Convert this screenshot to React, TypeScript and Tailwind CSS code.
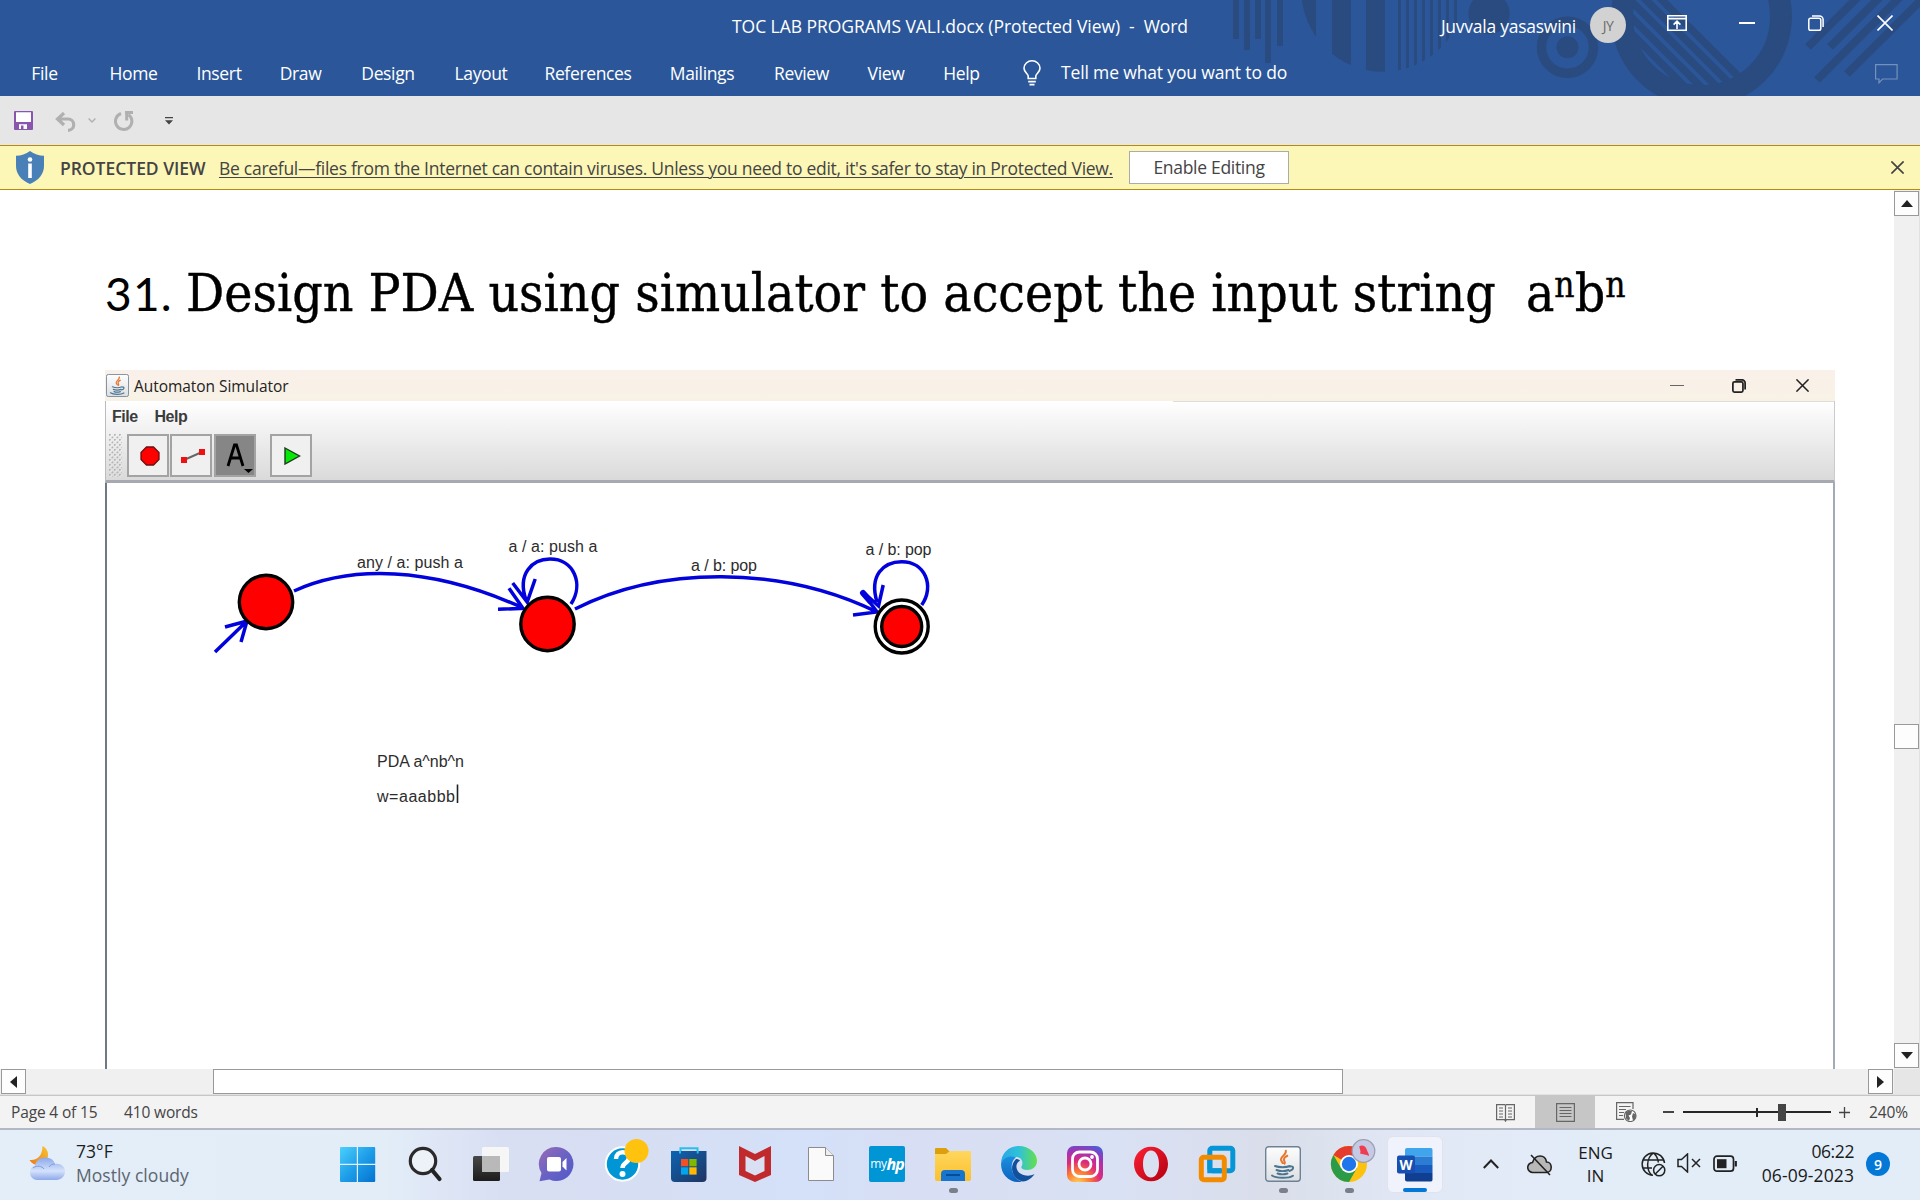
import React from "react";

const tabs: [string, string][] = [
  ["File", "w-[89px]"],
  ["Home", "w-[89px]"],
  ["Insert", "w-[82px]"],
  ["Draw", "w-[81px]"],
  ["Design", "w-[94px]"],
  ["Layout", "w-[92px]"],
  ["References", "w-[122px]"],
  ["Mailings", "w-[106px]"],
  ["Review", "w-[93px]"],
  ["View", "w-[76px]"],
  ["Help", "w-[75px]"],
];

function HeaderPattern() {
  const bars = [[1233, 39], [1244, 50], [1255, 39], [1265, 63], [1277, 46]];
  const wide = [[1302, 14], [1332, 19], [1366, 19]];
  const thin = [1398, 1406, 1414, 1422, 1430, 1438, 1446, 1454];
  return (
    <svg className="absolute right-0 top-0" width="720" height="96" viewBox="1200 0 720 96" fill="#2a4b80">
      <defs>
        <clipPath id="disc"><circle cx="1383" cy="-10" r="81.7" /></clipPath>
        <clipPath id="hole"><circle cx="1701.5" cy="16.6" r="69.5" /></clipPath>
      </defs>
      {bars.map(([x, h]) => <rect key={x} x={x} y="0" width="6" height={h} />)}
      <g clipPath="url(#disc)">
        {wide.map(([x, w]) => <rect key={x} x={x} y="0" width={w} height="96" />)}
        {thin.map((x) => <rect key={x} x={x} y="0" width="3" height="96" />)}
      </g>
      <circle cx="1489" cy="13.5" r="20.7" />
      <circle cx="1567.5" cy="47.3" r="26" fill="none" stroke="#2a4b80" strokeWidth="9.5" />
      <circle cx="1567.5" cy="47.3" r="11" />
      <circle cx="1701.5" cy="16.6" r="79.5" fill="none" stroke="#2a4b80" strokeWidth="22" />
      <g clipPath="url(#hole)" stroke="#2a4b80" strokeWidth="7.5">
        <path d="M1620 22l90 90M1620 6l100 100M1620 -10l110 110M1620 -26l130 130M1620 -42l140 140" />
      </g>
      <g stroke="#2a4b80" strokeWidth="8">
        <path d="M1808 47l55-55M1830 47l55-55M1817 80l94-94M1847 74l80-80" />
      </g>
    </svg>
  );
}

function RestoreIcon({ color, w }: { color: string; w: number }) {
  return (
    <svg width="16" height="16" viewBox="0 0 16 16" fill="none" stroke={color} strokeWidth={w}>
      <rect x="0.8" y="3.2" width="12" height="12" rx="1.8" />
      <path d="M4 .9h7.5a3.6 3.6 0 0 1 3.6 3.6V12" />
    </svg>
  );
}

function CloseIcon({ color, size, w }: { color: string; size: number; w: number }) {
  return (
    <svg width={size} height={size} viewBox="0 0 16 16" stroke={color} strokeWidth={w}>
      <path d="M.5.5l15 15M15.5.5l-15 15" />
    </svg>
  );
}

function Header() {
  return (
    <header className="relative h-[96px] bg-[#2b579a] text-[17.5px] text-white">
      <HeaderPattern />
      <div className="relative flex h-[46px] items-center">
        <div className="w-[732px] shrink-0" />
        <div className="whitespace-pre pt-[7px] tracking-[-0.05px]">TOC LAB PROGRAMS VALI.docx (Protected View)  -  Word</div>
        <div className="flex flex-1 items-center justify-end pr-[27px]">
          <span className="mr-[14px] pt-[7px] tracking-[-0.25px]">Juvvala yasaswini</span>
          <span className="mr-[41px] mt-[4px] flex h-9 w-9 items-center justify-center rounded-full bg-[#d2d2d2] text-[14px] tracking-[-0.5px] text-[#6a6a6a]">JY</span>
          <svg className="mr-[52px]" width="20" height="16" viewBox="0 0 20 16" fill="none" stroke="#fff" strokeWidth="1.6">
            <path d="M.8.8h18.4v14.4H.8zM.8 3.6h18.4M10 14V6.5M6.6 9.6L10 6.2l3.4 3.4" />
          </svg>
          <div className="mr-[53px] h-[1.5px] w-4 bg-white" />
          <div className="mr-[53px]"><RestoreIcon color="#fff" w={1.5} /></div>
          <CloseIcon color="#fff" size={16} w={1.6} />
        </div>
      </div>
      <div className="relative flex h-[50px] items-center">
        {tabs.map(([t, w]) => (
          <div key={t} className={`${w} pt-[4px] text-center tracking-[-0.35px]`}>{t}</div>
        ))}
        <svg className="ml-[24px] mt-[4px]" width="18" height="26" viewBox="0 0 18 26" fill="none" stroke="#fff" strokeWidth="1.6">
          <path d="M5.2 18.5v-2.6C4.6 13.6 1 12 1 8.200A8 7.400 0 0 1 17 8.200c0 3.800-3.600 5.400-4.200 7.700v2.600zM5.200 21.600h7.600M6.500 24.600h5" />
        </svg>
        <span className="ml-[20px] pt-[3px] tracking-[-0.15px]">Tell me what you want to do</span>
        <svg className="ml-auto mr-[22px] mt-[5px]" width="23" height="20" viewBox="0 0 23 20" fill="none" stroke="#7490bd" strokeWidth="1.200">
          <path d="M.6.6h21.500v14.400H7.500L4 18.800V15H.6z" />
        </svg>
      </div>
    </header>
  );
}

function QuickAccess() {
  return (
    <div className="flex h-[49px] items-center bg-[#e6e6e6] pl-[14px]">
      <svg width="19" height="19" viewBox="0 0 19 19">
        <path d="M0 1a1 1 0 0 1 1-1h17a1 1 0 0 1 1 1v17a1 1 0 0 1-1 1H1a1 1 0 0 1-1-1z" fill="#8a55ac" />
        <path d="M2 1.300h15v9.700H2zM5 13.300h8V18H9.500v-3.500H7V18H5z" fill="#fff" />
      </svg>
      <svg className="ml-[22px] mt-[2px]" width="22" height="20" viewBox="0 0 22 20" fill="none" stroke="#b0b0b0" strokeWidth="3.200">
        <path d="M9 1L2.500 7l6.500 6M3 7h10a5.700 5.700 0 0 1 0 11.400" />
      </svg>
      <svg className="ml-[11px]" width="8" height="5" viewBox="0 0 8 5" fill="none" stroke="#b0b0b0" strokeWidth="1.400">
        <path d="M.6.6L4 4 7.400.6" />
      </svg>
      <svg className="ml-[18px] mt-px" width="20" height="20" viewBox="0 0 20 20" fill="none" stroke="#b0b0b0" strokeWidth="3">
        <path d="M7 2.500A8.200 8.200 0 1 0 14.500 3.600M11 1.500h8M12.700 1v8.500" />
      </svg>
      <svg className="ml-[31px]" width="8" height="8" viewBox="0 0 8 8" fill="#444">
        <path d="M0 0h8v1.300H0zM0 3.200h8L4 7.600z" />
      </svg>
    </div>
  );
}

function ProtectedBar() {
  return (
    <div className="flex h-[45px] items-center border-y border-[#b8890f] bg-[#fcf7b6] text-[17.500px] text-[#444]">
      <svg className="ml-4" width="28" height="33" viewBox="0 0 28 33">
        <path d="M14 0c4 3 9 4.600 14 4.800V15c0 8-5.500 14.500-14 18C5.500 29.500 0 23 0 15V4.800C5 4.600 10 3 14 0z" fill="#4a80b8" />
        <circle cx="14" cy="8.500" r="2.300" fill="#fff" />
        <rect x="12.200" y="12.500" width="3.600" height="14.500" fill="#fff" />
      </svg>
      <b className="ml-[16px] w-[159px] shrink-0 whitespace-nowrap pt-[2px] font-semibold tracking-[-0.030px]">PROTECTED VIEW</b>
      <span className="whitespace-nowrap pt-[2px] tracking-[-0.280px] underline decoration-1 underline-offset-[2px]">
        Be careful—files from the Internet can contain viruses. Unless you need to edit, it's safer to stay in Protected View.
      </span>
      <div className="ml-auto mr-[602px] flex h-[33px] w-[160px] items-center justify-center border border-[#ababab] bg-white tracking-[-0.3px]">Enable Editing</div>
      <div className="mr-[16px]"><CloseIcon color="#444" size={13} w={2} /></div>
    </div>
  );
}

function JavaCup({ size }: { size: number }) {
  return (
    <svg width={size} height={size} viewBox="0 0 36 36">
      <defs>
        <linearGradient id="jb" x1="0" y1="0" x2="0" y2="1"><stop offset="0" stopColor="#fdfdfd" /><stop offset="1" stopColor="#dcdfe2" /></linearGradient>
      </defs>
      <rect x=".7" y=".7" width="34.600" height="34.600" rx="3" fill="url(#jb)" stroke="#6e8296" strokeWidth="1.400" />
      <path d="M20.500 4c2.500 4-5.500 6.500-4.500 10 .5 1.600 2 2.500 2 4M23 9.500c-3.500 1.500-5 3.500-3.600 5.500.8 1.200.6 2.200-.4 3.400" fill="none" stroke="#e8772e" strokeWidth="2" />
      <path d="M10 20c4 1.600 11 1.600 15 0M11.500 24c3.500 1.300 8.500 1.300 12 0M12.500 27.500c3 1 7 1 10 0M25 20.500c4-1 4.500 3-.5 4.500M7 29.500c4 3 17 3 21 .2" fill="none" stroke="#4d7490" strokeWidth="1.900" strokeLinecap="round" />
    </svg>
  );
}

function Automaton() {
  return (
    <svg className="block" width="1726" height="586" viewBox="107 483 1726 586">
      <g fill="none" stroke="#0202dc" strokeWidth="3.500">
        <path d="M215 652L247 621M225 627l22-6-6 21" />
        <path d="M294 591C350 565.500 430 565.500 523 608M498 609.300l25-1-14-20" />
        <path d="M526 600C517 574 532 559 550 559C574 559 584 584 571 604M512.700 583l14.500 19 8-23" />
        <path d="M575 609C660 566 780 565 877 612M853 615l24-3-14-19" />
        <path d="M877 602C869 576 883 561.700 901.700 561.700C925 561.700 935 586 921.700 605M863 592l15.500 14 4.700-21" />
      </g>
      <path d="M863 593l7 8" stroke="#0202dc" strokeWidth="6" strokeLinecap="round" />
      <g stroke="#000" strokeWidth="3.400">
        <circle cx="266" cy="602" r="26.700" fill="#fe0000" />
        <circle cx="547.500" cy="624" r="26.700" fill="#fe0000" />
        <circle cx="901.700" cy="626.500" r="26.500" fill="#fff" />
        <circle cx="901.700" cy="626.500" r="20" fill="#fe0000" />
      </g>
      <g fill="#2c2c2c" fontFamily="Liberation Sans, sans-serif" fontSize="16">
        <text x="357" y="567.500" textLength="106">any / a: push a</text>
        <text x="508.500" y="551.500" textLength="89">a / a: push a</text>
        <text x="691" y="571" textLength="66">a / b: pop</text>
        <text x="865.500" y="554.500" textLength="66">a / b: pop</text>
        <text x="377" y="767" textLength="87">PDA a^nb^n</text>
        <text x="377" y="802" textLength="78">w=aaabbb</text>
      </g>
      <path d="M457.500 784.500v18.500" stroke="#222" strokeWidth="1.600" />
    </svg>
  );
}

function Simulator() {
  const btn = "flex h-[43px] w-[42px] items-center justify-center border-2 border-[#a3a3a3] bg-[#f0f0f0]";
  return (
    <div className="ml-[105px] flex w-[1730px] flex-col">
      <div className="flex h-[31px] items-center bg-gradient-to-b from-[#faf0ea] to-[#f8f2e6] pl-[1px]">
        <JavaCup size={23} />
        <span className="ml-[5px] pt-[2px] text-[15.500px] tracking-[-0.05px] text-[#222]">Automaton Simulator</span>
        <div className="ml-auto mr-[48px] h-[1.500px] w-[14px] bg-[#666]" />
        <div className="mr-[50px]">
          <svg width="14" height="14" viewBox="0 0 16 16" fill="none" stroke="#222" strokeWidth="2"><rect x="1" y="3.200" width="11.500" height="11.800" rx="1.800" /><path d="M4 1h7.500A3.500 3.500 0 0 1 15 4.500V12" /></svg>
        </div>
        <div className="mr-[26px]"><CloseIcon color="#222" size={13} w={1.900} /></div>
      </div>
      <div className="flex h-[82px] flex-col border-b-[3px] border-l border-r border-[#a6a9af] border-l-[#b9bcc0] border-r-[#c9cbce] bg-gradient-to-b from-white to-[#dadada]">
        <div className="ml-auto h-px w-[661px] bg-[#deddd8]" />
        <div className="flex h-[30px] items-center gap-[17px] pl-[6px] font-['Liberation_Sans'] text-[16px] font-bold tracking-[-0.500px] text-[#3c3c3c]">
          <span>File</span><span>Help</span>
        </div>
        <div className="mt-[2px] flex items-center pl-[3px]">
          <svg className="mr-[5px]" width="13" height="43">
            <defs><pattern id="grip" width="5" height="5" patternUnits="userSpaceOnUse"><path d="M0 0h1.800v1.800H0zM2.500 2.500h1.800v1.800H2.500z" fill="#b4b4b4" /><path d="M1.500 1.500h1v1h-1z" fill="#fff" /></pattern></defs>
            <rect width="13" height="43" fill="url(#grip)" />
          </svg>
          <div className={btn + " pl-[3px]"}>
            <svg width="20" height="20" viewBox="0 0 20 20"><path d="M6.500 1h7L19 6.500v7L13.500 19h-7L1 13.500v-7z" fill="#fe0000" stroke="#6b1010" strokeWidth="1.300" /></svg>
          </div>
          <div className={btn + " ml-px pl-[3px]"}>
            <svg width="26" height="16" viewBox="0 0 26 16"><path d="M4 12L22 4" stroke="#666" strokeWidth="2" /><path d="M1 9h6v6H1zM19 1h6v6h-6z" fill="#f01010" /></svg>
          </div>
          <div className="ml-[2px] flex h-[43px] w-[42px] items-center justify-center border-2 border-[#a3a3a3] bg-[#868686] pl-[6px]">
            <svg width="30" height="34" viewBox="0 0 30 34"><path d="M5 27l6.500-21h2L20 27M7.500 19h10" fill="none" stroke="#000" strokeWidth="2.800" /><path d="M21 30h9l-4.500 4z" /></svg>
          </div>
          <div className={btn + " ml-[14px] pl-[2px]"}>
            <svg width="17" height="18" viewBox="0 0 17 18"><path d="M1 1l14.500 8L1 17z" fill="#08e808" stroke="#1c3c1c" strokeWidth="1.400" /></svg>
          </div>
        </div>
      </div>
      <div className="h-[586px] border-l-2 border-r-2 border-l-[#6f7884] border-r-[#a3abb6]"><Automaton /></div>
    </div>
  );
}

const sbBtn = "flex h-[25px] w-[25px] shrink-0 items-center justify-center border border-[#999] bg-[#fdfdfd]";

function DocumentArea() {
  return (
    <div className="flex h-[879px] overflow-hidden bg-white">
      <div className="flex w-[1894px] flex-col">
        <h1 className="flex h-[180px] items-baseline whitespace-pre pl-[105px] pt-[68px] text-black">
          <span className="w-[81px] font-['Lato'] text-[46px] leading-[70px] tracking-[1.200px]">31.</span>
          <span className="font-['DejaVu_Serif_Condensed','DejaVu_Serif'] text-[53px] leading-[70px] [-webkit-text-stroke:0.4px_black]">Design PDA using simulator to accept the input string  a<span className="relative -top-[14px] text-[35px] leading-none">n</span>b<span className="relative -top-[14px] text-[35px] leading-none">n</span></span>
        </h1>
        <Simulator />
      </div>
      <div className="flex w-[26px] flex-col border-r border-[#e2e2e2] bg-[#f0f0f0] pt-px">
        <div className={sbBtn}><svg width="12" height="7"><path d="M6 0l6 7H0z" fill="#222" /></svg></div>
        <div className="mt-[508px] h-[25px] w-[25px] border border-[#999] bg-[#fdfdfd]" />
        <div className={sbBtn + " mb-px mt-auto"}><svg width="12" height="7"><path d="M0 0h12L6 7z" fill="#222" /></svg></div>
      </div>
    </div>
  );
}

function HScroll() {
  return (
    <div className="flex h-[26px] items-start border-b border-[#e2e2e2] bg-[#f0f0f0]">
      <div className={sbBtn + " ml-px"}><svg width="7" height="12"><path d="M0 6l7-6v12z" fill="#222" /></svg></div>
      <div className="ml-[187px] h-[25px] w-[1130px] border border-[#999] bg-white" />
      <div className={sbBtn + " ml-auto"}><svg width="7" height="12"><path d="M7 6L0 0v12z" fill="#222" /></svg></div>
      <div className="ml-px h-[25px] w-[26px] bg-[#e6e6e6]" />
    </div>
  );
}

function StatusBar() {
  return (
    <div className="flex h-[33px] items-center border-t border-[#c6c6c6] bg-[#f3f3f3] text-[15.500px] text-[#444]">
      <span className="ml-[11px] w-[113px] pt-[2px] tracking-[-0.150px]">Page 4 of 15</span>
      <span className="pt-[2px] tracking-[-0.150px]">410 words</span>
      <svg className="ml-auto mr-[20px]" width="19" height="19" viewBox="0 0 19 19" fill="none" stroke="#666" strokeWidth="1.200">
        <path d="M.6 1.600h8L9.500 2.500l.9-.9h8v15h-8l-.9 1.500-.9-1.500h-8zM9.500 2v16M3 5h4M3 8h4M3 11h4M3 14h4M12 5h4M12 8h4M12 11h4M12 14h4" />
      </svg>
      <div className="flex h-full w-[60px] items-center justify-center bg-[#c6c6c6]">
        <svg width="19" height="19" viewBox="0 0 19 19" fill="none" stroke="#666" strokeWidth="1.200"><path d="M.6.600h17.800v17.800H.6zM3.500 4.500h12M3.500 7.500h12M3.500 10.500h12M3.500 13.500h12" /></svg>
      </div>
      <svg className="ml-[21px]" width="21" height="20" viewBox="0 0 21 20" fill="none" stroke="#666" strokeWidth="1.200">
        <path d="M17 7V.6H.6v16.800H8M3 4.500h11.500M3 7.500h7M3 10.500h5M3 13.500h4" />
        <circle cx="14.200" cy="13.800" r="5.800" fill="#fff" stroke="#666" /><path d="M9.500 10.500l3-2 3.500.5-1 3.500-2.500 1 1.500 2.500-1 3-3-2.500zM17 11l3 1.500-.5 4-2.500 2-1-4z" fill="#666" stroke="none" />
      </svg>
      <div className="ml-[26px] h-[1.500px] w-[11px] bg-[#444]" />
      <div className="ml-[9px] flex h-[18px] w-[148px] items-center">
        <div className="h-[2px] w-[73px] bg-[#262626]" />
        <div className="h-[9px] w-[2px] bg-[#262626]" />
        <div className="h-[2px] w-[20px] bg-[#262626]" />
        <div className="h-[17px] w-[8px] bg-[#444]" />
        <div className="h-[2px] flex-1 bg-[#262626]" />
      </div>
      <svg className="ml-[8px]" width="11" height="11" stroke="#444" strokeWidth="1.300"><path d="M0 5.500h11M5.500 0v11" /></svg>
      <span className="ml-[19px] w-[51px] pt-[2px] text-[15.500px] tracking-[-0.100px]">240%</span>
    </div>
  );
}

function TaskIcon({ children, dot }: { children: React.ReactNode; dot?: boolean }) {
  return (
    <div className="flex h-[70px] w-[66px] shrink-0 flex-col items-center pt-[16px]">
      {children}
      {dot && <div className="mt-[6px] h-[5px] w-[9px] rounded-full bg-[#7b7f8a]" />}
    </div>
  );
}

const S = ({ children }: { children: React.ReactNode }) => (
  <svg width="36" height="36" viewBox="0 0 36 36" className="shrink-0 overflow-visible">{children}</svg>
);

function Taskbar() {
  return (
    <div className="flex h-[72px] items-start border-t-2 border-[#b2b8c5] bg-[linear-gradient(90deg,#e3eef8_0%,#e3edf8_20%,#d9dff3_26%,#d6def3_34%,#d4e1f9_42%,#d8def3_48%,#d9e1f4_58%,#dadeeb_66%,#e2e9f6_75%,#e2edf8_85%,#e3edf8_100%)]">
      <svg className="ml-[28px] mt-[16px]" width="38" height="36" viewBox="0 0 38 36">
        <defs>
          <linearGradient id="moon" x1="0" y1="1" x2="1" y2="0"><stop offset="0" stopColor="#ec7a1c" /><stop offset="1" stopColor="#f7c52e" /></linearGradient>
          <linearGradient id="cl" x1="0" y1="0" x2="0" y2="1"><stop offset="0" stopColor="#8aa7ea" /><stop offset=".6" stopColor="#d4e2fb" /><stop offset="1" stopColor="#8fa9ea" /></linearGradient>
        </defs>
        <path d="M14.500 0c6 3 8 11 2 16.500C12 20.500 5 20 1.500 14c8 1 13-5 13-14z" fill="url(#moon)" />
        <path d="M8.500 34A7.500 7.500 0 0 1 7 19.500C8 14 13 11 18 11.500c5 .3 8 3 9 6.500 6-1.500 10 3 10 7.500S33 34 28.500 34z" fill="url(#cl)" />
        <path d="M5 22c4-3 9-2 11 1M21 21c1-2 3-3 6-3" fill="none" stroke="#7f9be4" strokeWidth="1" />
      </svg>
      <div className="ml-[10px] mt-[9px] w-[250px] text-[17.500px] leading-[24px] tracking-[0.050px]">
        <div className="text-[#1d1d1d]">73°F</div>
        <div className="text-[#5c6570]">Mostly cloudy</div>
      </div>
      <TaskIcon>
        <S><defs><linearGradient id="win" gradientUnits="userSpaceOnUse" x1="0" y1="0" x2="36" y2="36"><stop offset="0" stopColor="#4cd0fd" /><stop offset=".5" stopColor="#1d9de8" /><stop offset="1" stopColor="#0270cf" /></linearGradient></defs>
          <path d="M-1 2q0-1 1-1h15.800v16.800H-1zM17 1h16.200q1 0 1 1v15.800H17zM-1 19h16.800v17H0q-1 0-1-1zM17 19h17.200v16q0 1-1 1H17z" fill="url(#win)" /></S>
      </TaskIcon>
      <TaskIcon><S><circle cx="16" cy="15" r="12.700" fill="#edf1f8" stroke="#2a2a2a" strokeWidth="3.200" /><path d="M25 24l7.500 9" stroke="#222" strokeWidth="4.200" strokeLinecap="round" /></S></TaskIcon>
      <TaskIcon><S><defs><linearGradient id="tv" x1="0" y1="0" x2="0" y2="1"><stop offset="0" stopColor="#484848" /><stop offset="1" stopColor="#1c1c1c" /></linearGradient></defs><rect x="0" y="10" width="27" height="25" rx="1.500" fill="url(#tv)" /><rect x="9" y="1" width="27" height="25" rx="1.500" fill="#f6f6f7" /><path d="M9 10h18v16H10.500Q9 26 9 24.500z" fill="#b9b9b9" /></S></TaskIcon>
      <TaskIcon><S><defs><linearGradient id="ch" x1="0" y1="0" x2="1" y2="1"><stop offset="0" stopColor="#9a6bb4" /><stop offset=".5" stopColor="#6a62c4" /><stop offset="1" stopColor="#5059c9" /></linearGradient></defs><path d="M17.500 1a17 17 0 1 1-7 32.500L.5 35.300l2-8.300A17 17 0 0 1 17.500 1z" fill="url(#ch)" /><rect x="8" y="11" width="14" height="14.500" rx="2" fill="#fff" /><path d="M23.500 16l4-4v12.500l-4-4z" fill="#fff" /></S></TaskIcon>
      <TaskIcon><S>
        <circle cx="17.500" cy="18" r="16.700" fill="#0096d6" stroke="#fff" strokeWidth="2" />
        <path d="M11 13c0-9 13-8.500 13-1.500 0 5.500-6.500 5-6.500 10.500" fill="none" stroke="#fff" strokeWidth="4.500" /><circle cx="17.500" cy="28" r="3" fill="#fff" />
        <circle cx="31.500" cy="5" r="12" fill="#fec20f" /></S></TaskIcon>
      <TaskIcon><S><defs><linearGradient id="st" x1="0" y1="0" x2="1" y2="1"><stop offset="0" stopColor="#0c64b4" /><stop offset="1" stopColor="#21345f" /></linearGradient></defs><path d="M9.500 8V2.200h17V8" fill="none" stroke="#2bbdf0" strokeWidth="2" /><path d="M0 5h35.500v27q0 4-4 4H4q-4 0-4-4z" fill="url(#st)" /><path d="M9 7.500V5M26.700 7.500V5" stroke="#2bbdf0" strokeWidth="2" /><path d="M10 13h7.300v7.300H10z" fill="#f25022" /><path d="M18.300 13h7.300v7.300h-7.300z" fill="#7fba00" /><path d="M10 21.300h7.300v7.300H10z" fill="#00a4ef" /><path d="M18.300 21.300h7.300v7.300h-7.300z" fill="#ffb900" /></S></TaskIcon>
      <TaskIcon><S><path d="M2 0l16 8L34 0v29l-16 7-16-7z" fill="#c02a2c" /><path d="M8.500 10l9.500 5 9.500-5v15L18 29.500 8.500 25z" fill="#d9e0f3" /></S></TaskIcon>
      <TaskIcon><S><path d="M5.500 1.500h17l8 8v25h-25z" fill="#fafafa" stroke="#8c8c8c" /><path d="M22.500 1.500v8h8" fill="#eee" stroke="#8c8c8c" /></S></TaskIcon>
      <TaskIcon><div className="flex h-9 w-9 items-center justify-center rounded-[2px] bg-[#0096d6] font-['Open_Sans'] text-[12px] tracking-[-0.500px] text-white">my<b className="text-[16px] italic tracking-[-1px]">hp</b></div></TaskIcon>
      <TaskIcon dot><S><defs><linearGradient id="fo" x1="0" y1="0" x2="0" y2="1"><stop offset="0" stopColor="#ffd75e" /><stop offset="1" stopColor="#fbc02d" /></linearGradient></defs><path d="M0 3q0-1 1-1h10l4 4v6H0z" fill="#dd9f0b" /><path d="M0 8h11l4-3h20q1 0 1 1v27q0 2-2 2H2q-2 0-2-2z" fill="url(#fo)" /><path d="M6 35v-7q0-4 4-4h16q4 0 4 4v7z" fill="#1675cf" /><path d="M11 29h14" stroke="#0b4b92" strokeWidth="2" /></S></TaskIcon>
      <TaskIcon><S>
        <defs>
          <linearGradient id="e1" x1="0" y1="0" x2="1" y2="0"><stop offset="0" stopColor="#2aa7e8" /><stop offset=".5" stopColor="#2fc2d8" /><stop offset="1" stopColor="#66e04a" /></linearGradient>
          <linearGradient id="e2" x1="0" y1="0" x2="0" y2="1"><stop offset="0" stopColor="#1b8fe0" /><stop offset="1" stopColor="#0c62bd" /></linearGradient>
        </defs>
        <path d="M0 18C0 7 8 0 18 0s18 7 18 15c0 6-5 9-9.500 9s-7-1.500-6-3.500c2-3 1-9-5-9.500C8 10.500 2 13 0 18z" fill="url(#e1)" />
        <path d="M0 18C2 11.500 9 9 15 11.500 9 15 8 31 21 35.700 9 38 0 29 0 18z" fill="url(#e2)" />
        <path d="M15 13c-8 8-3 21 7 22.600 5-.6 9-3.600 11.500-7.600-6 3.500-15 1.500-17.500-4.500-1.500-4 0-7 3-9-1-1-2.500-1.500-4-1.500z" fill="#10509c" /></S></TaskIcon>
      <TaskIcon><S><defs><radialGradient id="ig" cx=".3" cy="1.050" r="1.150"><stop offset="0" stopColor="#ffd55a" /><stop offset=".3" stopColor="#fd7a34" /><stop offset=".55" stopColor="#dd2a7b" /><stop offset=".8" stopColor="#a233b5" /><stop offset="1" stopColor="#515bd4" /></radialGradient></defs><rect width="36" height="36" rx="7" fill="url(#ig)" /><g fill="none" stroke="#fff" strokeWidth="2.800"><rect x="5.500" y="6" width="25" height="24.500" rx="7" /><circle cx="18" cy="18" r="6" /></g><circle cx="25" cy="11" r="1.900" fill="#fff" /></S></TaskIcon>
      <TaskIcon><S><defs><linearGradient id="op" x1="0" y1="0" x2="1" y2="1"><stop offset="0" stopColor="#ff2035" /><stop offset="1" stopColor="#b0000f" /></linearGradient></defs><path fillRule="evenodd" d="M18 .8C27.500.8 35 8.500 35 18s-7.500 17.300-17 17.300S1 27.500 1 18 8.500.8 18 .8zM18 4.500c-5 0-8 6-8 13.500s3 13.500 8 13.500 8-6 8-13.500-3-13.500-8-13.500z" fill="url(#op)" /></S></TaskIcon>
      <TaskIcon><S><rect x="10.800" y="2.300" width="23" height="22.500" rx="2.500" fill="none" stroke="#0695d7" strokeWidth="5" /><rect x="2.300" y="11.300" width="23" height="22.500" rx="2.500" fill="none" stroke="#f38b00" strokeWidth="5" /><path d="M10.800 14v10.800H22" fill="none" stroke="#0695d7" strokeWidth="5" /></S></TaskIcon>
      <TaskIcon dot><JavaCup size={36} /></TaskIcon>
      <TaskIcon dot><S>
        <circle cx="18" cy="18" r="18" fill="#fdc210" />
        <path d="M18 18L2.400 9A18 18 0 0 1 33.600 9z" fill="#e33b2e" /><path d="M2.400 9a18 18 0 0 0 15.600 27l8-14L18 18 10 22z" fill="#2c9b48" />
        <path d="M18 9h15.600" stroke="#e33b2e" />
        <circle cx="18" cy="18" r="9" fill="#fff" /><circle cx="18" cy="18" r="7.200" fill="#1f76ec" />
        <circle cx="32.500" cy="5" r="11.300" fill="#c6c9e4" stroke="#9a9fb4" strokeWidth="1.200" /><path d="M28.500 0c3-1.500 6 0 7 3s2.500 4.500 2.500 7c-3-1.500-6.500-1.500-9-2.500 1.500-2.500-1-5-.5-7.500z" fill="#f03c50" /></S></TaskIcon>
      <div className="mx-[5px] mt-[6px] flex h-[57px] w-[56px] shrink-0 flex-col items-center rounded-[6px] border border-[#dfe3ee] bg-[#f0f3fb] pt-[10px]">
        <svg width="36" height="36" viewBox="0 0 36 36" className="shrink-0"><path d="M8 3q0-2 2-2h24q1.500 0 1.500 2v6.500H8z" fill="#41a5ee" /><path d="M8 9.500h27.500V18H8z" fill="#2b7cd3" /><path d="M8 18h27.500v8H8z" fill="#185abd" /><path d="M8 26h27.500v6.500q0 2-1.500 2H10q-2 0-2-2z" fill="#103f91" /><rect x="0" y="8.500" width="18" height="18" rx="2" fill="#164fb0" /><text x="9" y="22.500" textAnchor="middle" fontFamily="Open Sans" fontWeight="700" fontSize="13.500" fill="#fff">W</text></svg>
        <div className="mt-[5px] h-[5px] w-[24px] rounded-full bg-[#0378d6]" />
      </div>
      <svg className="ml-[35px] mt-[29px]" width="16" height="10" viewBox="0 0 16 10" fill="none" stroke="#222" strokeWidth="2"><path d="M.8 9L8 1.500 15.200 9" /></svg>
      <svg className="ml-[28px] mt-[24px]" width="25" height="22" viewBox="0 0 25 22"><path d="M6 18.500a5 5 0 0 1-.5-10C7 4 10 2 13 2c4 0 6 2.500 6.500 6 3 0 4.700 2.500 4.700 5.200 0 3-2 5.300-5 5.300z" fill="#b8b8b8" stroke="#222" strokeWidth="1.600" /><path d="M4 1l19 20" stroke="#222" strokeWidth="1.600" /></svg>
      <div className="ml-[24px] mt-[11px] w-[39px] text-center text-[17px] leading-[23px] tracking-[-0.100px] text-[#1b1b1b]">ENG<br />IN</div>
      <svg className="ml-[26px] mt-[22px]" width="25" height="25" viewBox="0 0 25 25" fill="none" stroke="#222" strokeWidth="1.500">
        <path d="M23.500 11A11.200 11.200 0 1 0 12 23.300M12.500 1C5 6 5 18 11 23.300M12.500 1c3 2.500 4.600 6 4.800 9.500M2 8h20.500M2 16h9" /><circle cx="18.200" cy="18.200" r="5.600" /><path d="M14.300 22l7.700-7.700" />
      </svg>
      <svg className="ml-[11px] mt-[23px]" width="24" height="20" viewBox="0 0 24 20" fill="none" stroke="#222" strokeWidth="1.500"><path d="M1 6.500h3.500L10.500 1v18l-6-5.500H1zM15 6l8 8M23 6l-8 8" /></svg>
      <svg className="ml-[12px] mt-[25px]" width="25" height="18" viewBox="0 0 25 18" fill="none" stroke="#222" strokeWidth="1.700"><rect x="1" y="1.200" width="19.500" height="15" rx="3" /><path d="M22.800 6v5.500" strokeWidth="2.200" /><path d="M4 4.200h9.500v9H4z" fill="#222" stroke="none" /></svg>
      <div className="ml-auto mt-[9px] text-right text-[17.500px] leading-[24px] text-[#1b1b1b]"><span className="tracking-[-0.400px]">06:22</span><br /><span className="tracking-[0.100px]">06-09-2023</span></div>
      <div className="ml-[12px] mr-[30px] mt-[22px] flex h-6 w-6 items-center justify-center rounded-full bg-[#0378d6] text-[14px] font-semibold text-white">9</div>
    </div>
  );
}

export default function App() {
  return (
    <div className="flex h-[1200px] w-[1920px] flex-col overflow-hidden bg-white font-['Open_Sans',sans-serif]">
      <Header />
      <QuickAccess />
      <ProtectedBar />
      <DocumentArea />
      <HScroll />
      <StatusBar />
      <Taskbar />
    </div>
  );
}
